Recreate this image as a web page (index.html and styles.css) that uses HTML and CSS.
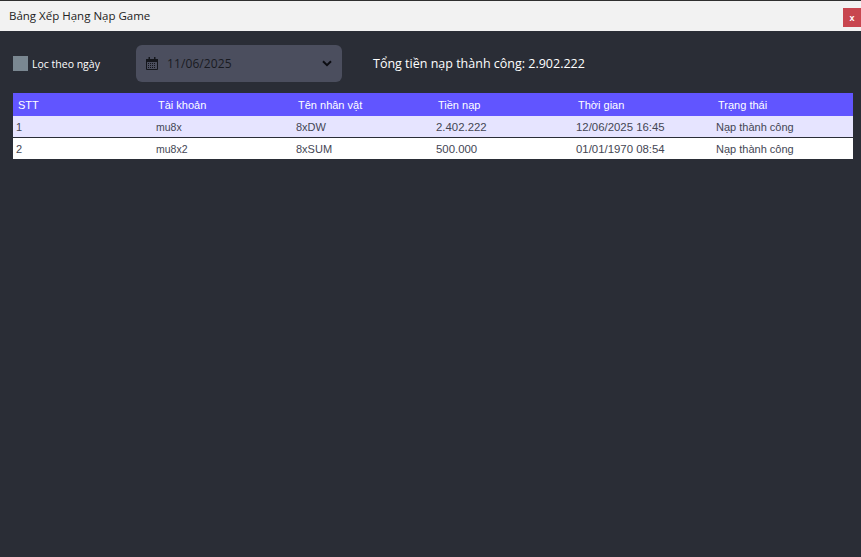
FILE: index.html
```html
<!DOCTYPE html>
<html lang="vi">
<head>
<meta charset="utf-8">
<title>Bảng Xếp Hạng Nạp Game</title>
<link rel="stylesheet" href="styles.css">
</head>
<body>
<div class="window">
  <header class="titlebar">
    <span class="title">Bảng Xếp Hạng Nạp Game</span>
    <button class="close">x</button>
  </header>
  <main class="content">
    <div class="toolbar">
      <label class="filter"><span class="check"></span><span>Lọc theo ngày</span></label>
      <div class="date">
        <svg class="cal" viewBox="0 0 12 13" width="12" height="13" aria-hidden="true">
          <path d="M.5 2.5h11v10H.5z" fill="none" stroke="#14161c"/>
          <path d="M0 2h12v3H0zM2.500 0h1.500v3H2.500zM8 0h1.500v3H8z" fill="#14161c"/>
          <path d="M2 6.500h8M2 8.500h8M2 10.500h8" stroke="#14161c" stroke-dasharray="1 1" fill="none"/>
        </svg>
        <span class="date-value">11/06/2025</span>
        <svg class="chev" viewBox="0 0 10 7" width="10" height="7" aria-hidden="true">
          <path d="M1 1.200l4 4 4-4" fill="none" stroke="#0c0d12" stroke-width="2"/>
        </svg>
      </div>
      <div class="total">Tổng tiền nạp thành công: 2.902.222</div>
    </div>
    <div class="table">
      <div class="row head">
        <div>STT</div><div>Tài khoản</div><div>Tên nhân vật</div><div>Tiền nạp</div><div>Thời gian</div><div>Trạng thái</div>
      </div>
      <div class="row odd">
        <div>1</div><div class="narrow">mu8x</div><div>8xDW</div><div class="num">2.402.222</div><div class="num">12/06/2025 16:45</div><div>Nạp thành công</div>
      </div>
      <div class="row even">
        <div>2</div><div class="narrow">mu8x2</div><div>8xSUM</div><div class="num">500.000</div><div class="num">01/01/1970 08:54</div><div>Nạp thành công</div>
      </div>
    </div>
  </main>
</div>
</body>
</html>
```
FILE: styles.css
```css
* { box-sizing: border-box; }
html, body { margin: 0; height: 100%; overflow: hidden; }
body { background: #2a2d36; font-family: "Open Sans", "Noto Sans", sans-serif; }
.window { height: 557px; display: flex; flex-direction: column; padding-left: 1px; background: #2a2d36; }
.titlebar {
  height: 31px; flex: none; display: flex; align-items: flex-start; justify-content: space-between;
  background: #f2f2f2; border-top: 1px solid #2f2f2f; margin-left: -1px; padding-left: 9px;
}
.title { font-size: 11.500px; line-height: 30px; color: #222; }
.close {
  width: 18px; height: 19px; margin-top: 7px; padding: 0; border: 0; background: #c8464f; color: #fff;
  font: bold 9px/18px "Liberation Sans", sans-serif;
}
.content { flex: 1; padding: 14px 8px 0 12px; }
.toolbar { height: 37px; display: flex; align-items: center; }
.filter { display: flex; align-items: center; gap: 4px; width: 123px; color: #fff; font-size: 10.500px; }
.check { width: 15px; height: 15px; background: #7a8791; }
.date {
  width: 206px; height: 37px; display: flex; align-items: center; padding: 0 10px 0 10px;
  background: #4b4e5e; border-radius: 6px;
}
.cal { flex: none; }
.date-value { flex: 1; margin-left: 9px; font-size: 12px; color: #191b22; letter-spacing: .1px; }
.chev { flex: none; }
.total { margin-left: 31px; color: #fff; font-size: 12.500px; }
.table { margin-top: 11px; width: 840px; font-family: "Liberation Sans", sans-serif; font-size: 11px; }
.row { display: grid; grid-template-columns: repeat(6, 140px); align-items: center; }
.row > div { padding-left: 3px; }
.row > .num { font-size: 11.400px; }
.row > .narrow { font-size: 10.500px; }
.head { height: 23px; background: #6155ff; color: #fff; }
.row.head > div { padding-left: 5px; }
.odd { height: 22px; background: #e6e4ff; color: #444654; border-bottom: 1px solid #2a2d36; }
.even { height: 21px; background: #fff; color: #444654; }
```
